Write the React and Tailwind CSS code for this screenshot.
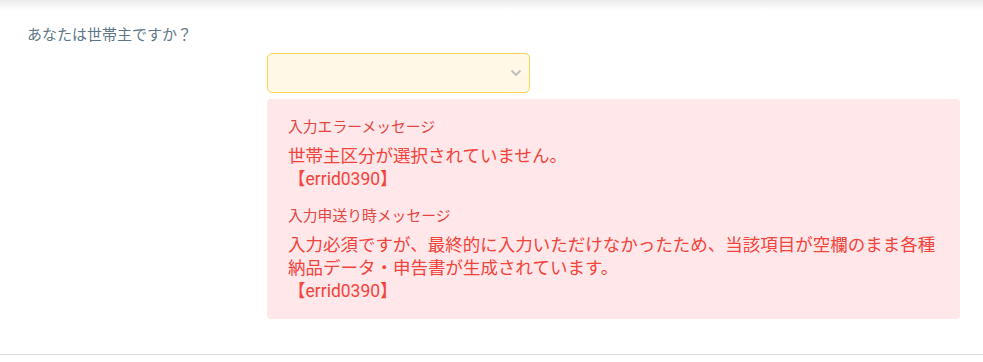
export default function App() {
  const font = { fontFamily: 'Roboto, "Noto Sans CJK JP", sans-serif' };
  return (
    <div className="w-[983px] h-[362px] bg-white" style={font}>
      <div className="h-[10px] bg-gradient-to-b from-[#ebebeb] to-white" />
      <div className="pl-[27px] pr-[23px] pt-[15px] pb-[35px] border-b border-[#dcdcdc]">
        <div className="text-[15px] leading-[20px] text-[#5e7686]">あなたは世帯主ですか？</div>
        <div className="pl-[240px] mt-[8px]">
          <div className="w-[263px] h-[40px] rounded-[5px] border border-[#ffd451] bg-[#fff8e6] flex items-center justify-end pr-[7px]">
            <svg width="12" height="8" viewBox="0 0 12 8" fill="none">
              <polyline points="1.5,1.5 6,6 10.5,1.5" stroke="#bdbdbd" strokeWidth="1.8" />
            </svg>
          </div>
          <div className="mt-[6px] rounded-[4px] bg-[#ffe7ea] pl-[21px] pr-[20px] pt-[18px] pb-[16px] text-[#f2443a]">
            <div className="text-[14.8px] leading-[20px] text-[#e2463f]">入力エラーメッセージ</div>
            <div className="mt-[8px] text-[17.5px] leading-[23px]">
              世帯主区分が選択されていません。
              <br />
              【errid0390】
            </div>
            <div className="mt-[15px] text-[14.8px] leading-[20px] text-[#e2463f]">入力申送り時メッセージ</div>
            <div className="mt-[8px] text-[17.5px] leading-[23px]">
              入力必須ですが、最終的に入力いただけなかったため、当該項目が空欄のまま各種納品データ・申告書が生成されています。
              <br />
              【errid0390】
            </div>
          </div>
        </div>
      </div>
    </div>
  );
}
